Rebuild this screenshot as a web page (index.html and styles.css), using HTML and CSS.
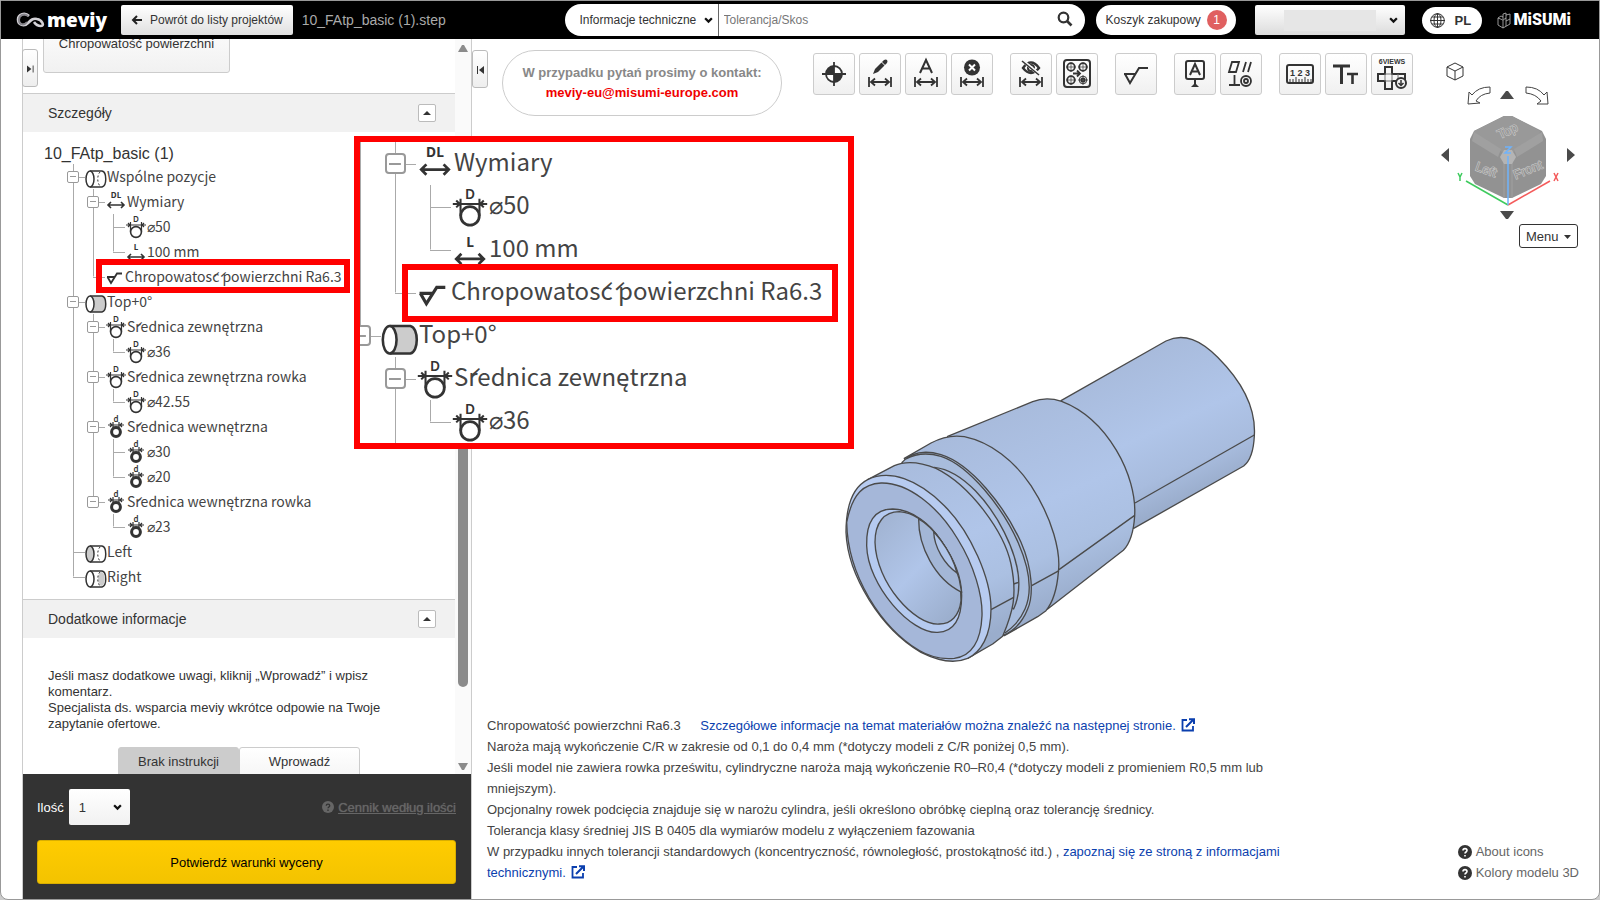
FILE: index.html
```html
<!DOCTYPE html>
<html lang="pl">
<head>
    <meta charset="UTF-8">
    <meta name="viewport" content="width=device-width, initial-scale=1.0">
    <title>meviy - 10_FAtp_basic (1).step</title>
    <link rel="stylesheet" href="styles.css">
</head>
<body>
    <!-- Shared icons -->
    <svg class="defs" width="0" height="0" aria-hidden="true">
        <symbol id="i-chevron" viewBox="0 0 8 6"><path d="M1 1l3 3 3-3" fill="none" stroke="currentColor" stroke-width="2"/></symbol>
        <symbol id="i-cyl-all" viewBox="0 0 22 25"><path d="M5 7h12c5 1 5 15 0 16H5" fill="#fff" stroke="#333" stroke-width="1.5"/><path d="M15 8c-3 3-3 11 0 14" fill="none" stroke="#333" stroke-dasharray="2 2"/><ellipse cx="5" cy="15" rx="4" ry="8" fill="#fff" stroke="#333" stroke-width="1.5"/></symbol>
        <symbol id="i-cyl-top" viewBox="0 0 22 25"><path d="M5 7h12c5 1 5 15 0 16H5" fill="#ccc" stroke="#333" stroke-width="1.5"/><ellipse cx="5" cy="15" rx="4" ry="8" fill="#fff" stroke="#333" stroke-width="1.5"/></symbol>
        <symbol id="i-cyl-left" viewBox="0 0 22 25"><path d="M5 7h12c5 1 5 15 0 16H5" fill="#fff" stroke="#333" stroke-width="1.5"/><path d="M15 8c-3 3-3 11 0 14" fill="none" stroke="#333" stroke-dasharray="2 2"/><ellipse cx="5" cy="15" rx="4" ry="8" fill="#ccc" stroke="#333" stroke-width="1.5"/></symbol>
        <symbol id="i-cyl-right" viewBox="0 0 22 25"><path d="M5 7h12c5 1 5 15 0 16H5" fill="#fff" stroke="#333" stroke-width="1.5"/><path d="M16 8c-4 3-4 11 0 14 5 0 5-14 0-14z" fill="#ccc"/><path d="M15 8c-3 3-3 11 0 14" fill="none" stroke="#333" stroke-dasharray="2 2"/><ellipse cx="5" cy="15" rx="4" ry="8" fill="#fff" stroke="#333" stroke-width="1.5"/></symbol>
        <symbol id="i-dl" viewBox="0 0 22 25"><text x="11" y="9" text-anchor="middle" class="icon-letter">DL</text><path d="M3 16h16M6 13l-3 3 3 3M16 13l3 3-3 3" fill="none" stroke="#333" stroke-width="1.6"/></symbol>
        <symbol id="i-l" viewBox="0 0 22 25"><text x="11" y="11" text-anchor="middle" class="icon-letter">L</text><path d="M3 18h16M6 15l-3 3 3 3M16 15l3 3-3 3" fill="none" stroke="#333" stroke-width="1.6"/></symbol>
        <symbol id="i-od" viewBox="0 0 22 25"><text x="11" y="8" text-anchor="middle" class="icon-letter thin">D</text><path d="M1 11h20M5.5 8v10M16.5 8v10M3 9l2 2-2 2M19 9l-2 2 2 2" fill="none" stroke="#333" stroke-width="1.2"/><circle cx="11" cy="18" r="5.4" fill="#fff" stroke="#333" stroke-width="1.6"/></symbol>
        <symbol id="i-id" viewBox="0 0 22 25"><text x="11" y="8" text-anchor="middle" class="icon-letter thin">d</text><path d="M3 11h16M8 8v8M14 8v8M5 9l2 2-2 2M17 9l-2 2 2 2M8 13h6" fill="none" stroke="#333" stroke-width="1.2"/><circle cx="11" cy="18" r="4.4" fill="#fff" stroke="#333" stroke-width="3"/></symbol>
        <symbol id="i-finish" viewBox="0 0 22 25"><path d="M2 13h8M2.5 13l3.5 6 6-9.5h5" fill="none" stroke="#333" stroke-width="1.8"/></symbol>
        <symbol id="i-span" viewBox="0 0 24 10"><path d="M1 0v10M23 0v10M3 5h18M7 1.5L3 5l4 3.5M17 1.5L21 5l-4 3.5" fill="none" stroke="#333" stroke-width="1.8"/></symbol>
        <symbol id="i-help" viewBox="0 0 14 14"><circle cx="7" cy="7" r="7" fill="currentColor"/><path d="M5 5.5C5 3 9 3 9 5.5 9 7 7 7 7 8.500M7 10v1.6" fill="none" stroke="var(--hole, #fff)" stroke-width="1.6"/></symbol>
        <symbol id="i-external" viewBox="0 0 14 14"><path d="M6 2H1.5v10.5H12V8" fill="none" stroke="currentColor" stroke-width="1.8"/><path d="M5 9l7-7M8 1.2h5V6" fill="none" stroke="currentColor" stroke-width="2"/></symbol>
        <symbol id="i-step" viewBox="0 0 8 8"><path d="M0 0l5 4-5 4z" fill="#333"/><path d="M7 0v8" stroke="#333"/></symbol>
    </svg>

    <!-- Top bar -->
    <header class="topbar">
        <a href="#" class="logo" aria-label="meviy">
            <svg width="30" height="16" viewBox="0 0 30 16" fill="none"><path d="M13 4C9 0 2 2 2 7.500S8 15 12 11c3-3 5-5 9-4 5 1 8 7 4 7-3 0-5-1-7-4" stroke="#d3d1d6" stroke-width="2.6"/><path d="M12 4C8 1 3 3 3 8s5 6 8 2" stroke="#88868c" stroke-width="2"/></svg>
            <span>meviy</span>
        </a>
        <button type="button" class="back-btn">
            <svg width="12" height="10" viewBox="0 0 12 10" fill="none" stroke="#222" stroke-width="2"><path d="M11 5H2M6 1L2 5l4 4"/></svg>
            Powrót do listy projektów
        </button>
        <span class="file-name">10_FAtp_basic (1).step</span>
        <form class="search">
            <div class="select">
                <select aria-label="Kategoria"><option>Informacje techniczne</option></select>
                <svg width="9" height="7"><use href="#i-chevron"/></svg>
            </div>
            <input type="text" placeholder="Tolerancja/Skos" aria-label="Szukaj">
            <button type="button" aria-label="Szukaj"><svg width="16" height="16" viewBox="0 0 16 16" fill="none" stroke="#333"><circle cx="6.5" cy="6.5" r="4.8" stroke-width="2.2"/><path d="M10 10l4.5 4.5" stroke-width="2.6"/></svg></button>
        </form>
        <button type="button" class="cart">Koszyk zakupowy <span>1</span></button>
        <div class="select account">
            <select aria-label="Konto"><option></option></select>
            <span class="account-mask"></span>
            <svg width="9" height="7"><use href="#i-chevron"/></svg>
        </div>
        <button type="button" class="lang">
            <svg width="15" height="15" viewBox="0 0 15 15" fill="none" stroke="#333"><circle cx="7.5" cy="7.5" r="6.8"/><ellipse cx="7.5" cy="7.5" rx="3.5" ry="6.8"/><path d="M7.5 0v15M0 7.5h15M2 4h11M2 11h11"/></svg>
            PL
        </button>
        <a href="#" class="misumi" aria-label="MiSUMi">
            <svg width="14" height="17" viewBox="0 0 14 17" fill="none" stroke="#bbb" stroke-width=".8"><path d="M1 6l5 2v8l-5-3zM6 8l3-2v3l4-2v5l-7 4M6 7V2l3-1v5M1 6l3-2 2 1M9 3l4-1v5M9 9v5"/></svg>
            <span>MiSUMi</span>
        </a>
    </header>

    <main class="workspace">
        <!-- Left panel -->
        <aside class="panel">
            <button type="button" class="fold fold-left" aria-label="Zwiń panel"><svg width="7" height="8"><use href="#i-step"/></svg></button>
            <div class="panel-body">
                <div class="panel-content">
                    <button type="button" class="finish-btn">Chropowatość powierzchni</button>

                    <div class="section-head">
                        <h2>Szczegóły</h2>
                        <button type="button" aria-label="Zwiń"><svg width="8" height="4" viewBox="0 0 8 4"><path d="M0 4l4-4 4 4z" fill="#333"/></svg></button>
                    </div>
                    <div class="details">
                        <p class="root-name">10_FAtp_basic (1)</p>
                        <ul class="tree">
                            <li>
                                <div class="row"><button type="button" class="toggle" aria-label="Zwiń"></button><svg><use href="#i-cyl-all"/></svg><span>Wspólne pozycje</span></div>
                                <ul>
                                    <li>
                                        <div class="row"><button type="button" class="toggle" aria-label="Zwiń"></button><svg><use href="#i-dl"/></svg><span>Wymiary</span></div>
                                        <ul>
                                            <li><div class="row"><svg><use href="#i-od"/></svg><span>⌀50</span></div></li>
                                            <li><div class="row"><svg><use href="#i-l"/></svg><span>100 mm</span></div></li>
                                        </ul>
                                    </li>
                                    <li><div class="row finish"><svg><use href="#i-finish"/></svg><span>Chropowatos&#x301;c&#x301; powierzchni Ra6.3</span><i class="mark"></i></div></li>
                                </ul>
                            </li>
                            <li>
                                <div class="row"><button type="button" class="toggle" aria-label="Zwiń"></button><svg><use href="#i-cyl-top"/></svg><span>Top+0°</span></div>
                                <ul>
                                    <li>
                                        <div class="row"><button type="button" class="toggle" aria-label="Zwiń"></button><svg><use href="#i-od"/></svg><span>S&#x301;rednica zewnętrzna</span></div>
                                        <ul>
                                            <li><div class="row"><svg><use href="#i-od"/></svg><span>⌀36</span></div></li>
                                        </ul>
                                    </li>
                                    <li>
                                        <div class="row"><button type="button" class="toggle" aria-label="Zwiń"></button><svg><use href="#i-od"/></svg><span>S&#x301;rednica zewnętrzna rowka</span></div>
                                        <ul>
                                            <li><div class="row"><svg><use href="#i-od"/></svg><span>⌀42.55</span></div></li>
                                        </ul>
                                    </li>
                                    <li>
                                        <div class="row"><button type="button" class="toggle" aria-label="Zwiń"></button><svg><use href="#i-id"/></svg><span>S&#x301;rednica wewnętrzna</span></div>
                                        <ul>
                                            <li><div class="row"><svg><use href="#i-id"/></svg><span>⌀30</span></div></li>
                                            <li><div class="row"><svg><use href="#i-id"/></svg><span>⌀20</span></div></li>
                                        </ul>
                                    </li>
                                    <li>
                                        <div class="row"><button type="button" class="toggle" aria-label="Zwiń"></button><svg><use href="#i-id"/></svg><span>S&#x301;rednica wewnętrzna rowka</span></div>
                                        <ul>
                                            <li><div class="row"><svg><use href="#i-id"/></svg><span>⌀23</span></div></li>
                                        </ul>
                                    </li>
                                </ul>
                            </li>
                            <li><div class="row"><svg><use href="#i-cyl-left"/></svg><span>Left</span></div></li>
                            <li><div class="row"><svg><use href="#i-cyl-right"/></svg><span>Right</span></div></li>
                        </ul>
                    </div>

                    <div class="section-head">
                        <h2>Dodatkowe informacje</h2>
                        <button type="button" aria-label="Zwiń"><svg width="8" height="4" viewBox="0 0 8 4"><path d="M0 4l4-4 4 4z" fill="#333"/></svg></button>
                    </div>
                    <div class="extra">
                        <p>Jeśli masz dodatkowe uwagi, kliknij „Wprowadź” i wpisz komentarz.<br>Specjalista ds. wsparcia meviy wkrótce odpowie na Twoje zapytanie ofertowe.</p>
                        <div class="choice">
                            <button type="button" class="active">Brak instrukcji</button>
                            <button type="button">Wprowadź</button>
                        </div>
                    </div>
                </div>
                <div class="scrollbar">
                    <svg width="10" height="8" viewBox="0 0 10 8"><path d="M0 8l4-7h2l4 7z" fill="#8b8b8b"/></svg>
                    <div class="thumb"></div>
                    <svg width="10" height="8" viewBox="0 0 10 8"><path d="M0 0l4 7h2l4-7z" fill="#8b8b8b"/></svg>
                </div>
            </div>
            <div class="order">
                <div class="order-row">
                    <label for="qty">Ilość</label>
                    <div class="select qty">
                        <select id="qty"><option>1</option></select>
                        <svg width="9" height="7"><use href="#i-chevron"/></svg>
                    </div>
                    <a href="#" class="price-link"><svg width="12" height="12"><use href="#i-help"/></svg><span>Cennik według ilości</span></a>
                </div>
                <button type="button" class="confirm">Potwierdź warunki wyceny</button>
            </div>
        </aside>

        <!-- 3D viewer -->
        <section class="viewer">
            <button type="button" class="fold fold-right" aria-label="Rozwiń panel"><svg width="7" height="8" viewBox="0 0 7 8"><path d="M7 0L2 4l5 4z" fill="#333"/><path d="M.5 0v8" stroke="#333"/></svg></button>
            <div class="viewer-top">
                <div class="contact">
                    <span>W przypadku pytań prosimy o kontakt:</span>
                    <a href="#">meviy-eu@misumi-europe.com</a>
                </div>
                <div class="toolbar">
                    <div class="tools">
                        <button type="button" aria-label="Punkt odniesienia"><svg viewBox="0 0 40 40"><circle cx="20" cy="20" r="8" fill="#fff" stroke="#333" stroke-width="1.8"/><path d="M20 20h8a8 8 0 0 1-8 8zM20 20h-8a8 8 0 0 1 8-8z" fill="#333"/><path d="M20 8v24M8 20h24" stroke="#333" stroke-width="1.8"/></svg></button>
                        <button type="button" aria-label="Edytuj wymiar"><svg viewBox="0 0 40 40"><path d="M13 20l2-5 9-9q2-1 3 0t0 3l-9 9z" fill="#333"/><path d="M21.500 8l4 4" stroke="#fff"/><use href="#i-span" x="8" y="23" width="24" height="10"/></svg></button>
                        <button type="button" aria-label="Automatyczny wymiar"><svg viewBox="0 0 40 40"><path d="M14 19l6-13 6 13M16 14.500h8" fill="none" stroke="#333" stroke-width="2"/><use href="#i-span" x="8" y="23" width="24" height="10"/></svg></button>
                        <button type="button" aria-label="Usuń wymiar"><svg viewBox="0 0 40 40"><circle cx="20" cy="13.5" r="8" fill="#333"/><path d="M17 10.500l6 6M23 10.500l-6 6" stroke="#fff" stroke-width="2"/><use href="#i-span" x="8" y="23" width="24" height="10"/></svg></button>
                    </div>
                    <div class="tools">
                        <button type="button" aria-label="Ukryj wymiar"><svg viewBox="0 0 40 40"><path d="M12 14q8-11 16 0-8 10-16 0z" fill="none" stroke="#333" stroke-width="2.4"/><circle cx="20" cy="14" r="3" fill="none" stroke="#333" stroke-width="2"/><path d="M12 7l17 14" stroke="#f8f8f8" stroke-width="3"/><path d="M11 7l17 14" stroke="#333" stroke-width="1.5"/><use href="#i-span" x="8" y="23" width="24" height="10"/></svg></button>
                        <button type="button" aria-label="Grupuj otwory"><svg viewBox="0 0 40 40" fill="none" stroke="#333"><rect x="7" y="6" width="26" height="27" rx="3" stroke-width="2"/><circle cx="14" cy="13" r="3.8" stroke-width="1.8"/><circle cx="26" cy="13" r="3.8" stroke-width="1.8"/><circle cx="14" cy="26" r="3.8" stroke-width="1.8"/><circle cx="26" cy="26" r="3.8"/><circle cx="26" cy="26" r="1.6" stroke-width="2"/><path d="M9 13h10M14 8v10M21 13h10M26 8v10M9 26h10M14 21v10M21 26h10M26 21v10" stroke-width=".7"/><path d="M16 19.500h7M20 16.500l3 3-3 3" stroke-width="1.8"/></svg></button>
                    </div>
                    <div class="tools">
                        <button type="button" aria-label="Chropowatość"><svg viewBox="0 0 40 40"><path d="M8 20h12M9 20l5 9 9-15h9" fill="none" stroke="#333" stroke-width="2"/></svg></button>
                    </div>
                    <div class="tools">
                        <button type="button" aria-label="Baza"><svg viewBox="0 0 40 40" fill="none" stroke="#333" stroke-width="2"><rect x="11" y="7" width="18" height="18" rx="2"/><path d="M15 21l5-11 5 11M17 17.500h6M20 25v5"/><path d="M16 33l4-4 4 4z" fill="#333" stroke="none"/></svg></button>
                        <button type="button" aria-label="Tolerancje geometryczne"><svg viewBox="0 0 40 40" fill="none" stroke="#333" stroke-width="1.8"><path d="M8 18l3-10h7l-3 10zM22 18l3-10M27 18l3-10M8 31h11M13.500 21v10"/><circle cx="25" cy="27" r="5"/><circle cx="25" cy="27" r="2"/></svg></button>
                    </div>
                    <div class="tools">
                        <button type="button" aria-label="Pomiar"><svg viewBox="0 0 40 40"><rect x="7" y="11" width="26" height="18" rx="2" fill="none" stroke="#333" stroke-width="2"/><text x="20" y="22" text-anchor="middle" class="tool-num">1 2 3</text><path d="M10 28v-3M13 28v-3M16 28v-5M19 28v-3M22 28v-3M25 28v-5M28 28v-3M31 28v-3" stroke="#333"/></svg></button>
                        <button type="button" aria-label="Rozmiar tekstu"><svg viewBox="0 0 40 40" fill="none" stroke="#333"><path d="M7 12h17M15.500 12v18" stroke-width="3"/><path d="M21 20h11M26.500 20v10" stroke-width="2.6"/></svg></button>
                        <button type="button" aria-label="6 widoków"><svg viewBox="0 0 40 40"><text x="20" y="10" text-anchor="middle" class="tool-views">6VIEWS</text><path d="M13 13h7v7h13v7H20v8h-7v-8H6v-7h7z" fill="none" stroke="#333" stroke-width="2"/><path d="M13 20h7v7h-7zM26 20v7" fill="none" stroke="#777" stroke-width="1"/><circle cx="29" cy="29" r="5" fill="#f4f4f4" stroke="#333" stroke-width="2"/><path d="M29 26v5M26.500 29l2.500 2.500 2.500-2.500" fill="none" stroke="#333" stroke-width="1.5"/></svg></button>
                    </div>
                </div>
            </div>

            <!-- Shaft model -->
            <div class="canvas">
                <svg class="part" viewBox="-90 0 1410 1080" fill="none" stroke="#4a4a4a" stroke-width="4" stroke-linejoin="round">
                    <defs>
                        <linearGradient id="g-body" gradientUnits="userSpaceOnUse" x1="460" y1="300" x2="700" y2="850"><stop offset="0" stop-color="#a8bbdc"/><stop offset=".5" stop-color="#b0c5e9"/><stop offset=".75" stop-color="#abc0e2"/><stop offset="1" stop-color="#9aadcc"/></linearGradient>
                        <linearGradient id="g-shaft" gradientUnits="userSpaceOnUse" x1="900" y1="120" x2="1090" y2="530"><stop offset="0" stop-color="#a8bbdc"/><stop offset=".5" stop-color="#b0c5e9"/><stop offset=".8" stop-color="#a8bcde"/><stop offset="1" stop-color="#9aadcc"/></linearGradient>
                        <linearGradient id="g-hole" x1="0" y1="0" x2=".8" y2="1"><stop offset="0" stop-color="#9fb1cf"/><stop offset=".55" stop-color="#b0c5e9"/><stop offset="1" stop-color="#9cafce"/></linearGradient>
                    </defs>
                    <path fill="url(#g-shaft)" d="M690 245L1005 66C1060 40 1110 65 1160 115 1235 190 1275 270 1270 350 1268 395 1258 425 1238 441L908 628Z"/>
                    <path d="M912 552L1270 348"/>
                    <path fill="url(#g-body)" d="M350 352L605 248C640 234 670 240 692 247 830 300 918 470 911 590 908 640 895 675 877 694L650 870 400 700Z"/>
                    <path fill="url(#g-body)" d="M220 418L300 372Q350 345 400 353C480 370 550 425 600 500 665 600 690 700 682 760 678 810 665 850 645 875L620 893 520 950Z"/>
                    <path d="M684 752L910 590M602 800L684 755"/>
                    <path fill="#a8bcdc" d="M213 430Q255 385 330 407C420 435 520 560 570 670 605 750 608 830 590 870 572 915 545 938 515 950L400 800Z"/>
                    <path d="M225 420Q270 395 330 412C415 440 515 565 562 672 598 755 604 820 582 870 565 908 545 925 522 942"/>
                    <path fill="url(#g-body)" d="M310 445C400 455 480 560 520 640 560 720 580 800 548 870L460 800Z"/>
                    <path d="M548 795L563 790"/>
                    <path fill="url(#g-body)" d="M110 482L190 440Q240 418 315 448C420 500 520 640 540 735 560 830 545 880 515 952L485 975 410 1018Z"/>
                    <path d="M480 872L548 835"/>
                    <path fill="#b7cbf0" d="M45 640C45 560 65 505 110 482 175 450 260 480 340 560 420 640 480 780 480 870 480 950 450 1000 410 1018 370 1035 320 1025 270 1000 150 930 50 770 45 640Z"/>
                    <path fill="#a5b7d9" d="M47 610C65 520 100 495 150 492 230 490 320 560 380 660 430 740 455 830 453 890 450 960 425 1010 370 1018 330 1022 290 1010 265 995 150 925 50 770 47 610Z"/>
                    <path fill="#b5caf0" d="M107 680C105 610 130 570 185 570 250 572 300 620 330 665 370 720 392 780 392 830 392 900 370 938 320 940 240 945 110 800 107 680Z"/>
                    <path fill="url(#g-hole)" d="M132 670C132 610 160 578 205 578 240 580 290 605 330 665 365 715 390 775 390 845 385 890 360 915 325 915 250 920 135 790 132 670Z"/>
                    <path fill="#a3b6d6" d="M263 600C262 680 310 780 392 820 385 760 365 715 330 665 305 630 285 612 263 600Z"/>
                    <path fill="#b0c5e9" d="M308 638C310 685 340 735 378 762 368 722 350 692 330 665Z"/>
                </svg>
            </div>

            <div class="viewer-bottom">
                <div class="notes">
                    <p>Chropowatość powierzchni Ra6.3 <a href="#" class="materials">Szczegółowe informacje na temat materiałów można znaleźć na następnej stronie. <svg width="14" height="14"><use href="#i-external"/></svg></a></p>
                    <p>Naroża mają wykończenie C/R w zakresie od 0,1 do 0,4 mm (*dotyczy modeli z C/R poniżej 0,5 mm).</p>
                    <p>Jeśli model nie zawiera rowka prześwitu, cylindryczne naroża mają wykończenie R0–R0,4 (*dotyczy modeli z promieniem R0,5 mm lub mniejszym).</p>
                    <p>Opcjonalny rowek podcięcia znajduje się w narożu cylindra, jeśli określono obróbkę cieplną oraz tolerancję średnicy.</p>
                    <p>Tolerancja klasy średniej JIS B 0405 dla wymiarów modelu z wyłączeniem fazowania</p>
                    <p>W przypadku innych tolerancji standardowych (koncentryczność, równoległość, prostokątność itd.) , <a href="#">zapoznaj się ze stroną z informacjami technicznymi. <svg width="14" height="14"><use href="#i-external"/></svg></a></p>
                </div>
                <ul class="about">
                    <li><a href="#"><svg width="14" height="14"><use href="#i-help"/></svg>About icons</a></li>
                    <li><a href="#"><svg width="14" height="14"><use href="#i-help"/></svg>Kolory modelu 3D</a></li>
                </ul>
            </div>

            <!-- View cube -->
            <div class="view-nav">
                <svg width="140" height="162" viewBox="0 0 140 162" fill="none">
                    <path d="M15 3l8 4v9l-8 4-8-4V7zM7 7l8 4 8-4M15 11v9" stroke="#333"/>
                    <path d="M50 27v6q-10 1-14 8l4 2-12 1 1-12 3 3q6-8 18-8zM86 27v6q10 1 15 8l-4 3 11 0-1-12-3 3q-6-8-18-8z" stroke="#444"/>
                    <path d="M60 39l6-8h2l6 8zM60 151l6 8h2l6-8zM9 88v14l-8-7zM127 88v14l8-7z" fill="#4a4a4a"/>
                    <path d="M64 56h8l30 15 4 8v37l-5 8-29 14h-8l-29-14-5-8V79l4-8z" fill="#929292"/>
                    <path d="M64 56h8l28 15-1 5-25 16h-12L35 76l-1-5z" fill="#999"/>
                    <path d="M34 72l27 17-3 8-26-16zM102 72L74 89l3 8 26-16z" fill="#a0a0a0"/>
                    <path d="M64 98v40M72 98v40" stroke="#a0a0a0"/>
                    <path d="M64 90h8l4 7-4 7h-8l-4-7z" fill="#b4b4b4"/>
                    <g class="cube-label" text-anchor="middle">
                        <text x="68" y="75" transform="rotate(-25 68 72)">Top</text>
                        <text x="46" y="114" transform="rotate(20 46 110)">Left</text>
                        <text x="88" y="114" transform="rotate(-22 88 110)">Front</text>
                    </g>
                    <path d="M68 145L26 121" stroke="#3ecb5e" stroke-width="1.5"/>
                    <path d="M68 145l42-24" stroke="#f45b5b" stroke-width="1.5"/>
                    <path d="M68 145V96" stroke="#6fb3fb" stroke-width="1.5"/>
                    <path d="M65 87h6l-6 6h6" stroke="#6fb3fb" stroke-width="1.5"/>
                    <path d="M18 113l2 4 2-4M20 117v4" stroke="#3ecb5e" stroke-width="1.5"/>
                    <path d="M114 113l4 8M118 113l-4 8" stroke="#f45b5b" stroke-width="1.5"/>
                </svg>
                <button type="button">Menu <svg width="7" height="4" viewBox="0 0 7 4"><path d="M0 0h7L3.500 4z" fill="#333"/></svg></button>
            </div>
        </section>

        <!-- Enlarged part of the tree -->
        <div class="callout">
            <ul class="tree large">
                <li>
                    <ul>
                        <li>
                            <div class="row"><button type="button" class="toggle" aria-label="Zwiń"></button><svg><use href="#i-dl"/></svg><span>Wymiary</span></div>
                            <ul>
                                <li><div class="row"><svg><use href="#i-od"/></svg><span>⌀50</span></div></li>
                                <li><div class="row"><svg><use href="#i-l"/></svg><span>100 mm</span></div></li>
                            </ul>
                        </li>
                        <li><div class="row finish"><svg><use href="#i-finish"/></svg><span>Chropowatos&#x301;c&#x301; powierzchni Ra6.3</span><i class="mark"></i></div></li>
                    </ul>
                </li>
                <li>
                    <div class="row"><button type="button" class="toggle" aria-label="Zwiń"></button><svg><use href="#i-cyl-top"/></svg><span>Top+0°</span></div>
                    <ul>
                        <li class="more">
                            <div class="row"><button type="button" class="toggle" aria-label="Zwiń"></button><svg><use href="#i-od"/></svg><span>S&#x301;rednica zewnętrzna</span></div>
                            <ul>
                                <li><div class="row"><svg><use href="#i-od"/></svg><span>⌀36</span></div></li>
                            </ul>
                        </li>
                    </ul>
                </li>
            </ul>
        </div>
    </main>
</body>
</html>
```

FILE: styles.css
```css
/* Global */
* {
    box-sizing: border-box;
}

body {
    margin: 0;
    height: 100vh;
    display: flex;
    flex-direction: column;
    overflow: hidden;
    background-color: #fff;
    border: 1px solid #999;
    border-radius: 0 0 8px 8px;
    font-family: "Liberation Sans", Arial, sans-serif;
    font-size: 13px;
    color: #333;
}

html {
    background-color: #ccc;
}

.defs {
    display: none;
}

button,
select,
input {
    font: inherit;
    color: inherit;
    margin: 0;
}

button {
    padding: 0;
    cursor: pointer;
}

a {
    color: #0b3fae;
    text-decoration: none;
}

h2,
p,
ul {
    margin: 0;
    padding: 0;
    font-weight: normal;
    list-style: none;
}

/* Drop-downs: the arrow shares the grid cell of the select */
.select {
    display: grid;
    align-items: center;
}

.select > * {
    grid-area: 1 / 1;
}

.select select {
    appearance: none;
    width: 100%;
    height: 100%;
    border: 0;
    background: none;
}

.select svg {
    justify-self: end;
    pointer-events: none;
    color: #111;
}

/* Top bar */
.topbar {
    flex: none;
    height: 38px;
    display: flex;
    align-items: center;
    background-color: #000;
    padding: 0 28px 0 15px;
}

.logo {
    display: flex;
    align-items: center;
    gap: 1px;
    width: 105px;
    color: #fff;
    font: 800 19px/30px "Open Sans", sans-serif;
}

.back-btn {
    display: flex;
    align-items: center;
    gap: 7px;
    height: 30px;
    padding: 0 10px;
    border: 0;
    border-radius: 2px;
    background: linear-gradient(#fff, #e0e0e0);
    font-size: 12px;
    white-space: nowrap;
}

.file-name {
    margin-left: 9px;
    color: #aaa;
    font-size: 14px;
    white-space: nowrap;
}

.search {
    display: flex;
    width: 520px;
    height: 32px;
    margin-left: auto;
    border-radius: 16px;
    background-color: #fff;
    overflow: hidden;
}

.search .select {
    width: 154px;
    border-right: 1px solid #666;
}

.search select {
    padding-left: 15px;
    font-size: 12px;
}

.search .select svg {
    margin-right: 5px;
}

.search input {
    flex: 1;
    min-width: 0;
    border: 0;
    padding: 0 5px;
    font-size: 12px;
}

.search input::placeholder {
    color: #777;
}

.search button {
    width: 40px;
    border: 0;
    background: none;
}

.cart {
    display: flex;
    align-items: center;
    justify-content: space-between;
    width: 140px;
    height: 30px;
    margin-left: 11px;
    padding: 0 9px 0 10px;
    border: 0;
    border-radius: 15px;
    background-color: #fff;
    font-size: 12px;
    white-space: nowrap;
}

.cart span {
    width: 20px;
    height: 20px;
    border-radius: 50%;
    background-color: #e06060;
    color: #fff;
    line-height: 20px;
}

.account {
    width: 150px;
    height: 30px;
    margin-left: 19px;
    border-radius: 2px;
    background: linear-gradient(#fff, #dcdcdc);
}

.account svg {
    margin-right: 7px;
}

.account-mask {
    width: 92px;
    height: 21px;
    margin-left: 29px;
    background-color: #e6e6e6;
    pointer-events: none;
}

.lang {
    display: flex;
    align-items: center;
    gap: 10px;
    width: 60px;
    height: 27px;
    margin-left: 17px;
    padding: 0 8px;
    border: 0;
    border-radius: 14px;
    background-color: #fff;
    font-size: 13px;
    font-weight: bold;
}

.misumi {
    display: flex;
    align-items: center;
    gap: 3px;
    margin-left: 15px;
    color: #fff;
    font: 900 16px/20px Roboto, sans-serif;
}

/* Workspace */
.workspace {
    position: relative;
    flex: 1;
    min-height: 0;
    display: flex;
    padding-left: 21px;
}

.panel {
    position: relative;
    flex: none;
    width: 449px;
    display: flex;
    flex-direction: column;
    border-left: 1px solid #ccc;
}

.panel-body {
    flex: 1;
    min-height: 0;
    display: flex;
    overflow: hidden;
}

.panel-content {
    flex: 1;
}

.fold {
    position: absolute;
    z-index: 1;
    width: 16px;
    height: 38px;
    border: 1px solid #bbb;
    border-radius: 3px;
    background: linear-gradient(#fff, #eee);
}

.fold-left {
    left: -1px;
    top: 10px;
}

.fold-right {
    left: 0;
    top: 11px;
}

/* The list is scrolled down, so this button starts above the edge */
.finish-btn {
    display: block;
    width: 187px;
    height: 60px;
    margin: -26px 0 20px 20px;
    border: 1px solid #ccc;
    border-radius: 3px;
    background: linear-gradient(#fff, #f1f1f1);
}

.section-head {
    display: flex;
    align-items: center;
    justify-content: space-between;
    height: 39px;
    padding: 0 19px 0 25px;
    border-top: 1px solid #ccc;
    background-color: #f1f1f1;
}

.section-head h2 {
    font-size: 14px;
}

.section-head button {
    display: flex;
    align-items: center;
    justify-content: center;
    width: 18px;
    height: 18px;
    border: 1px solid #bbb;
    border-radius: 2px;
    background-color: #fff;
}

.details {
    padding: 11px 0 10px 21px;
}

.root-name {
    font-size: 16px;
    line-height: 21px;
}

/* Tree */
.tree {
    --row: 25px;
    --step: 20px;
    --icon: 22px;
    --gap: 12px;
    --box: 12px;
    --stub: 12px;
    --shift: 2px;
    --lift: 2px;
    margin-left: 29px;
    font: 14px/22px "Noto Sans CJK JP", "Noto Sans", sans-serif;
    color: #444;
}

.tree.large {
    --row: 43px;
    --step: 35px;
    --icon: 38px;
    --gap: 21px;
    --box: 21px;
    --stub: 21px;
    --shift: 3px;
    --lift: 5px;
    margin-left: 0;
    font-size: 24px;
    line-height: 36px;
}

.tree ul {
    padding-left: var(--step);
}

/* Branch line and its stub */
.tree li {
    background:
        linear-gradient(#aaa, #aaa) 0 0 / 1px 100% no-repeat,
        linear-gradient(#aaa, #aaa) 0 calc(var(--row) / 2) / var(--stub) 1px no-repeat;
}

.tree li:last-child:not(.more) {
    background-size: 1px calc(var(--row) / 2), var(--stub) 1px;
}

.tree.large > li {
    background-size: 1px 100%, 0 0;
}

.row {
    position: relative;
    display: flex;
    align-items: center;
    height: var(--row);
    padding-left: var(--gap);
    white-space: nowrap;
}

.row span {
    padding-bottom: var(--lift);
}

.row svg {
    flex: none;
    width: var(--icon);
    height: var(--row);
    overflow: visible;
}

.row.finish span {
    margin-left: calc(0px - var(--shift));
}

.toggle {
    flex: none;
    width: var(--box);
    height: var(--box);
    margin-left: calc(var(--box) / -2 - var(--gap));
    margin-right: calc(var(--gap) - var(--box) / 2);
    border: 1px solid #999;
    border-radius: 2px;
    background: linear-gradient(#999, #999) center / 60% 1px no-repeat #fff;
}

.large .toggle {
    border-width: 2px;
    border-radius: 4px;
    background-size: 70% 2px;
}

.icon-letter {
    font: bold 8px "Noto Sans", sans-serif;
    fill: #333;
}

.icon-letter.thin {
    font-weight: 600;
}

/* Red frame round the roughness row */
.mark {
    position: absolute;
    left: 3px;
    top: -5px;
    width: 254px;
    height: 34px;
    border: 6px solid #f00;
}

.large .mark {
    left: 7px;
    top: -7px;
    width: 436px;
    height: 58px;
}

.extra {
    padding: 30px 70px 0 25px;
}

.extra p {
    line-height: 16px;
}

.choice {
    display: flex;
    justify-content: center;
    margin: 15px -45px 0 0;
}

.choice button {
    width: 121px;
    height: 36px;
    padding-bottom: 8px;
    border: 1px solid #ccc;
    border-radius: 3px;
    background: linear-gradient(#fff, #f4f4f4);
}

.choice .active {
    background: #ccc;
}

.scrollbar {
    display: flex;
    flex-direction: column;
    align-items: center;
    width: 16px;
    padding: 5px 0 3px;
    background-color: #fafafa;
}

.thumb {
    width: 10px;
    height: 290px;
    margin: auto 0 76px;
    border-radius: 5px;
    background-color: #8b8b8b;
}

/* Order box */
.order {
    padding: 15px 15px 15px 14px;
    background-color: #333;
    color: #fff;
}

.order-row {
    display: flex;
    align-items: center;
    margin-bottom: 15px;
}

.qty {
    width: 61px;
    height: 36px;
    margin-left: 5px;
    border-radius: 2px;
    background: linear-gradient(#fff, #f1f1f1);
    color: #333;
}

.qty select {
    padding-left: 10px;
}

.qty svg {
    margin-right: 8px;
}

.price-link {
    display: flex;
    align-items: center;
    gap: 4px;
    margin-left: auto;
    color: #666;
    --hole: #333;
}

.price-link span {
    text-decoration: underline;
    text-shadow: 0 0 1px #666;
}

.confirm {
    width: 100%;
    height: 44px;
    border: 1px solid #d9ae00;
    border-radius: 3px;
    background: linear-gradient(#fc0, #f3c300);
    color: #000;
}

/* Viewer */
.viewer {
    position: relative;
    flex: 1;
    min-width: 0;
    display: flex;
    flex-direction: column;
    border-left: 1px solid #ccc;
}

.viewer-top {
    display: flex;
    align-items: flex-start;
    gap: 31px;
    padding: 11px 0 0 30px;
}

.contact {
    display: flex;
    flex-direction: column;
    align-items: center;
    width: 280px;
    height: 66px;
    padding-top: 12px;
    border: 1px solid #ccc;
    border-radius: 33px;
    color: #888;
    font-weight: bold;
    line-height: 20px;
    white-space: nowrap;
}

.contact a {
    color: #f00000;
}

.toolbar {
    display: flex;
    gap: 17px;
    padding-top: 3px;
}

.tools {
    display: flex;
    gap: 4px;
}

.tools button {
    width: 42px;
    height: 42px;
    border: 1px solid #ccc;
    border-radius: 3px;
    background: linear-gradient(#fff, #f0f0f0);
}

.tools svg {
    display: block;
    width: 40px;
    height: 40px;
}

.tool-num {
    font: bold 9px "Liberation Sans", sans-serif;
    fill: #333;
}

.tool-views {
    font: bold 7px "Liberation Sans", sans-serif;
    fill: #333;
}

.canvas {
    flex: 1;
    min-height: 0;
    display: flex;
    align-items: flex-end;
    justify-content: center;
    padding-bottom: 36px;
}

.part {
    width: 470px;
    height: 360px;
}

.viewer-bottom {
    display: flex;
    align-items: flex-end;
    justify-content: space-between;
    padding: 0 20px 16px 15px;
    line-height: 21px;
    color: #444;
}

.notes {
    width: 800px;
}

.notes svg {
    margin-left: 2px;
    vertical-align: -2px;
}

.materials {
    margin-left: 16px;
}

.about a {
    display: flex;
    align-items: center;
    gap: 4px;
    color: #666;
}

.about svg {
    color: #333;
}

/* View cube */
.view-nav {
    position: absolute;
    top: 21px;
    right: 19px;
    display: flex;
    flex-direction: column;
    align-items: flex-end;
}

.view-nav button {
    width: 59px;
    height: 24px;
    margin: 2px 2px 0 0;
    border: 1px solid #333;
    border-radius: 3px;
    background-color: #fff;
}

.view-nav button svg {
    margin-left: 2px;
    vertical-align: 2px;
}

.cube-label text {
    font: 13px "Liberation Sans", sans-serif;
    fill: #999;
    stroke: #ccc;
    stroke-width: 1px;
    paint-order: stroke;
}

/* Callout */
.callout {
    position: absolute;
    z-index: 2;
    left: 353px;
    top: 97px;
    width: 500px;
    border: 6px solid #f00;
    background-color: #fff;
    overflow: hidden;
}
```
